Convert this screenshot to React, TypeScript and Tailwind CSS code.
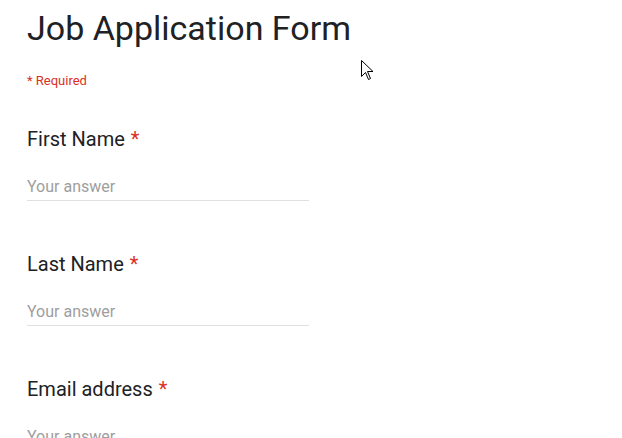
const fields = ['First Name', 'Last Name', 'Email address'];

function Cursor() {
  return (
    <svg className="absolute left-[361px] top-[60px]" width="13" height="21" viewBox="0 0 13 21">
      <path
        d="M0.5 0.5 L0.5 16.5 L4.5 12.5 L7.5 19.5 L9.5 18.5 L6.5 11.5 L12 11.5 Z"
        fill="#fff"
        stroke="#000"
        strokeWidth="1"
      />
    </svg>
  );
}

export default function App() {
  return (
    <div className="relative h-[438px] w-[622px] overflow-hidden bg-white font-['Roboto',sans-serif]">
      <div className="px-[27px] pt-[8px]">
        <h1 className="text-[34px] leading-[40px] text-[#202124]">Job Application Form</h1>
        <p className="mt-[25px] text-[13px] leading-[16px] text-[#d93025]">* Required</p>

        <div className="mt-[38px] flex flex-col gap-[51px]">
          {fields.map((label) => (
            <div key={label} className="w-[282px]">
              <label className="block text-[20px] leading-[24px] text-[#202124]">
                {label} <span className="ml-[1px] text-[#d93025]">*</span>
              </label>
              <input
                type="text"
                placeholder="Your answer"
                className="mt-[20px] block h-[30px] w-full border-b border-[#e0e0e0] bg-transparent pt-[2px] pb-0 text-[16px] text-[#202124] outline-none placeholder:text-[#9e9e9e]"
              />
            </div>
          ))}
        </div>
      </div>
      <Cursor />
    </div>
  );
}
